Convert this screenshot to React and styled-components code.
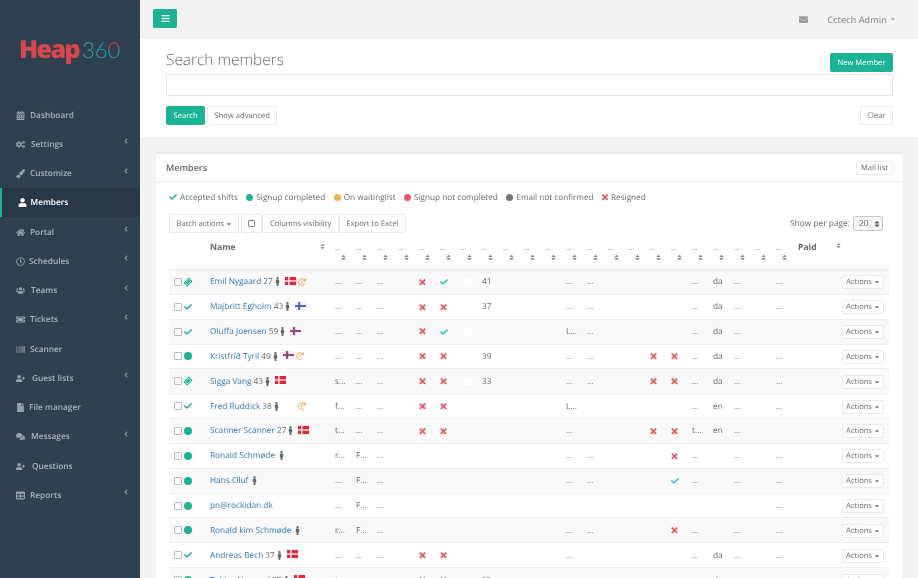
import React from "react";
import styled, { createGlobalStyle } from "styled-components";
import {
  FaCalendarAlt, FaCogs, FaPaintBrush, FaUser, FaHome, FaRegClock, FaUsers, FaTicketAlt,
  FaBarcode, FaUserPlus, FaFile, FaComments, FaTable, FaAngleLeft, FaBars, FaEnvelope,
  FaCheck, FaTimes, FaMale, FaHistory, FaCaretDown, FaSort,
} from "react-icons/fa";

const Global = createGlobalStyle`
  html, body { margin: 0; padding: 0; height: 578px; overflow: hidden; background: #f3f3f4; }
  body { font-family: "Open Sans", "Liberation Sans", sans-serif; font-size: 9px; color: #676a6c; text-rendering: geometricPrecision; }
  * { box-sizing: border-box; }
`;

const Shell = styled.div`display: flex; width: 918px; height: 578px; overflow: hidden; will-change: transform;`;
const Side = styled.aside`width: 140px; flex: none; background: #2f4050; color: #a7b1c2;`;
const LogoBox = styled.div`height: 100px; padding: 37px 0 0 19px; display: flex; align-items: baseline; line-height: 24px;`;
const LogoHeap = styled.span`font: 800 25px/24px "Open Sans", sans-serif; color: #d9464d; letter-spacing: -1.6px;`;
const Logo360 = styled.span`font: 300 22px/24px "Lato", sans-serif; color: #27a7b3; margin-left: 3px;`;
const LogoZero = styled.span`background: linear-gradient(#d9464d 50%, #27a7b3 50%); -webkit-background-clip: text; background-clip: text; color: transparent;`;
const NavItem = styled.div`
  height: 29.25px; display: flex; align-items: center; font-weight: 600; font-size: 8.3px; position: relative;
  padding-top: 1px;
  padding-left: ${p => (p.$active ? "15.5px" : "16px")};
  color: ${p => (p.$active ? "#fff" : "#a7b1c2")};
  background: ${p => (p.$active ? "#293846" : "transparent")};
  border-left: ${p => (p.$active ? "2.5px solid #1ab394" : "0")};
  svg.lead { width: 9px; height: 9px; margin-right: ${p => p.$gap || 5}px; flex: none; opacity: ${p => (p.$active ? 1 : 0.85)}; }
`;
const Chevron = styled(FaAngleLeft)`position: absolute; right: 11px; top: 8px; width: 6px; height: 8px; opacity: .7;`;

const Main = styled.main`flex: 1; min-width: 0; display: flex; flex-direction: column;`;
const Top = styled.header`height: 39px; padding: 9px 22px 0 13px; display: flex; align-items: flex-start; flex: none;`;
const Burger = styled.button`width: 24px; height: 19px; background: #1ab394; border: 0; border-radius: 2px; color: #fff; display: flex; align-items: center; justify-content: center; padding: 0; svg { width: 9px; height: 9px; }`;
const TopRight = styled.div`margin-left: auto; display: flex; align-items: center; height: 20px; color: #999c9e; font-weight: 600; font-size: 9px; svg.env { width: 9px; height: 9px; margin-right: 19px; } svg.car { width: 6px; height: 6px; margin-left: 3px; }`;
const SearchPanel = styled.section`background: #fff; height: 98px; padding: 11px 25px 0 26px; flex: none;`;
const SearchHead = styled.div`display: flex; justify-content: space-between; align-items: flex-start; height: 24px;`;
const Title = styled.h2`margin: 0; font-weight: 300; font-size: 15.4px; line-height: 20px; color: #676a6c;`;
const Btn = styled.button`
  font-family: inherit; font-size: 7.6px; height: 19px; padding: 0 6.5px; border-radius: 2px; cursor: pointer;
  display: inline-flex; align-items: center; white-space: nowrap; text-rendering: geometricPrecision;
  background: ${p => (p.$primary ? "#1ab394" : "#fff")};
  color: ${p => (p.$primary ? "#fff" : "#676a6c")};
  border: 1px solid ${p => (p.$primary ? "#1ab394" : "#e7eaec")};
  font-weight: 400;
`;
const NewBtn = styled(Btn)`margin-top: 3px;`;
const SearchInput = styled.div`height: 22px; border: 1px solid #e5e6e7; margin-bottom: 10px;`;
const SearchActions = styled.div`display: flex; gap: 2px; ${Btn}:last-child { margin-left: auto; }`;

const Card = styled.section`margin: 15px 16px 0 16px; background: #fff; border-top: 2px solid #e7eaec; flex: none;`;
const CardHead = styled.div`height: 28px; padding: 0 9px 0 10px; display: flex; align-items: center; justify-content: space-between; border-bottom: 1px solid #e7eaec; font-weight: 600; font-size: 9px; color: #676a6c;`;
const MailBtn = styled(Btn)`height: 14px; padding: 0 4px; margin-top: 1px;`;
const CardBody = styled.div`padding: 0 13px;`;
const Legend = styled.div`height: 32px; padding: 0 0 2px 0; display: flex; align-items: center; gap: 8.5px; font-size: 8.2px;`;
const LegendItem = styled.span`display: inline-flex; align-items: center; gap: 3px;`;
const Dot = styled.i`display: inline-block; width: ${p => p.$s || 7}px; height: ${p => p.$s || 7}px; border-radius: 50%; background: ${p => p.$c}; flex: none;`;
const Tools = styled.div`height: 19px; display: flex; align-items: center;`;
const ToolBtn = styled(Btn)`margin-right: ${p => p.$mr || 0}px; svg { width: 6px; height: 6px; margin-left: 2px; }`;
const MiniBox = styled.i`display: block; width: 7px; height: 7px; border: 1px solid #888; border-radius: 1px; margin: 0 -.5px;`;
const PerPage = styled.label`margin-left: auto; margin-right: 6px; display: flex; align-items: center; gap: 3px; font-size: 8.4px; `;
const Select = styled.span`width: 30px; height: 15px; border: 1px solid #c5c8ca; border-radius: 3px; background: #f5f5f5; display: flex; align-items: center; justify-content: space-between; padding: 0 2px 0 5px; svg { width: 6px; height: 8px; }`;

const grid = `display: grid; grid-template-columns: 41px 125px repeat(22, 21px) 1fr;`;
const HeadRow = styled.div`${grid} height: 29px; margin-top: 8px; border-bottom: 1px solid #e7eaec; position: relative; font-size: 7px;`;
const NameHead = styled.div`grid-column: 2; font-weight: 700; font-size: 8.6px; display: flex; justify-content: space-between; padding-right: 10px; line-height: 12px; svg { width: 5px; height: 7px; color: #999; margin-top: 2px; }`;
const ColHead = styled.div`display: flex; flex-direction: column; line-height: 10px; padding-top: 3px; color: #676a6c; svg { width: 5px; height: 7px; margin: 0 0 0 6px; color: #888; }`;
const PaidHead = styled.div`font-weight: 700; font-size: 8.6px; line-height: 12px; padding-left: 1px; display: flex; gap: 19px; svg { width: 5px; height: 7px; color: #999; margin-top: 1px; }`;
const Row = styled.div`${grid} height: 24.85px; align-items: center; background: ${p => (p.$odd ? "#f9f9f9" : "#fff")}; border-bottom: 1px solid #eeeeee; position: relative;`;
const Status = styled.div`display: flex; align-items: center; padding-left: 5px; gap: 2px; svg { width: 8px; height: 8px; color: #1ab394; }`;
const Check = styled.i`display: block; width: 8px; height: 8px; border: 1px solid #bbb; border-radius: 1px; background: #fff; margin-right: 0;`;
const TicketIcon = styled(FaTicketAlt)`transform: rotate(-45deg);`;
const NameCell = styled.div`display: flex; align-items: center; white-space: nowrap; font-size: 8.3px; color: #676a6c; position: relative; a { color: #337ab7; text-decoration: none; margin-right: 2px; } svg.m { width: 5px; height: 9px; color: #676a6c; margin-left: 2px; margin-right: 5px; }`;
const Flag = styled.svg`width: 11px; height: 8px; flex: none; margin-right: 2px; margin-top: -2px;`;
const Hist = styled(FaHistory)`width: 8px; height: 8px; color: #f8ac59; transform: scaleX(-1); position: ${p => (p.$abs ? "absolute" : "static")}; left: ${p => p.$abs || 0}px;`;
const Cell = styled.div`grid-column: ${p => p.$col + 3}; font-size: ${p => (p.$big ? 8.3 : 8)}px; white-space: nowrap; color: #676a6c; svg { display: block; }`;
const White = styled.i`display: block; width: 8px; height: 8px; background: #fff; margin-left: 3px;`;
const ActionCell = styled.div`grid-column: 25; grid-row: 1; justify-self: end; margin-right: 5px;`;
const ActionBtn = styled(Btn)`height: 14px; padding: 0 3px; svg { width: 6px; height: 6px; margin-left: 2px; }`;

const Denmark = () => (
  <Flag viewBox="0 0 11 8"><rect width="11" height="8" fill="#e4253c" /><rect x="3.2" width="1.3" height="8" fill="#fff" /><rect y="3.4" width="11" height="1.2" fill="#fff" /></Flag>
);
const Finland = () => (
  <Flag viewBox="0 0 11 8"><rect width="11" height="8" fill="#f4f4f8" /><rect x="3.2" width="2" height="8" fill="#5b62ab" /><rect y="3" width="11" height="2" fill="#5b62ab" /></Flag>
);
const Faroe = () => (
  <Flag viewBox="0 0 11 8"><rect width="11" height="8" fill="#f4f4f8" /><rect x="3" width="2.2" height="8" fill="#5b62ab" /><rect y="2.9" width="11" height="2.2" fill="#5b62ab" /><rect x="3.6" width="1" height="8" fill="#d9364a" /><rect y="3.5" width="11" height="1" fill="#d9364a" /></Flag>
);
const flags = { dk: Denmark, fi: Finland, fo: Faroe };

const nav = [
  ["Dashboard", FaCalendarAlt, 0, 5],
  ["Settings", FaCogs, 1, 6],
  ["Customize", FaPaintBrush, 1, 5],
  ["Members", FaUser, 0, 4, true],
  ["Portal", FaHome, 1, 5],
  ["Schedules", FaRegClock, 1, 4],
  ["Teams", FaUsers, 1, 6],
  ["Tickets", FaTicketAlt, 1, 5],
  ["Scanner", FaBarcode, 0, 5],
  ["Guest lists", FaUserPlus, 1, 7],
  ["File manager", FaFile, 0, 4],
  ["Messages", FaComments, 1, 6],
  ["Questions", FaUserPlus, 0, 7],
  ["Reports", FaTable, 1, 5],
];

const D = "...";
const X = "x", OK = "v", W = "w";
const rows = [
  { s: "t", n: "Emil Nygaard", a: 27, f: "dk", h: 1, c: { 0: D, 1: D, 2: D, 4: X, 5: OK, 6: W, 7: "41", 11: D, 12: D, 17: D, 18: "da", 19: D, 21: D } },
  { s: "c", n: "Majbritt Egholm", a: 43, f: "fi", c: { 0: D, 1: D, 2: D, 4: X, 5: X, 7: "37", 11: D, 12: D, 17: D, 18: "da", 19: D, 21: D } },
  { s: "c", n: "Oluffa Joensen", a: 59, f: "fo", c: { 0: D, 1: D, 2: D, 4: X, 5: OK, 6: W, 11: "L...", 12: D, 17: D, 18: "da", 19: D } },
  { s: "d", n: "Kristfríð Tyril", a: 49, f: "fo", h: 1, c: { 0: D, 1: D, 2: D, 4: X, 5: X, 7: "39", 11: D, 12: D, 15: X, 16: X, 17: D, 18: "da", 19: D, 21: D } },
  { s: "t", n: "Sigga Vang", a: 43, f: "dk", c: { 0: "s...", 1: D, 2: D, 4: X, 5: X, 6: W, 7: "33", 11: D, 12: D, 15: X, 16: X, 17: D, 18: "da", 19: D, 21: D } },
  { s: "c", n: "Fred Ruddick", a: 38, h: 2, c: { 0: "f...", 1: D, 2: D, 4: X, 5: X, 11: "L...", 17: D, 18: "en", 19: D, 21: D } },
  { s: "d", n: "Scanner Scanner", a: 27, f: "dk", c: { 0: "t...", 1: D, 2: D, 4: X, 5: X, 11: D, 15: X, 16: X, 17: "t...", 18: "en", 19: D } },
  { s: "d", n: "Ronald Schmøde", c: { 0: "r...", 1: "F...", 2: D, 11: D, 12: D, 16: X, 17: D, 19: D, 21: D } },
  { s: "d", n: "Hans Oluf", c: { 0: D, 1: "F...", 2: D, 11: D, 12: D, 16: OK, 17: D, 19: D, 21: D } },
  { s: "d", n: "pn@rockidan.dk", nm: 1, c: { 0: D, 1: "F...", 2: D, 21: D } },
  { s: "d", n: "Ronald kim Schmøde", c: { 0: "r...", 1: "F...", 2: D, 11: D, 12: D, 16: X, 17: D, 19: D, 21: D } },
  { s: "c", n: "Andreas Bech", a: 37, f: "dk", c: { 0: D, 1: D, 2: D, 4: X, 5: X, 11: D, 17: D, 18: "da", 19: D, 21: D } },
  { s: "d", n: "Tobias Nygaard", a: 37, f: "dk", c: { 0: "t...", 1: D, 2: D, 4: X, 5: X, 7: "33", 11: D, 17: D, 18: "da", 19: D, 21: D } },
];

const RedX = styled(FaTimes)`color: #ed5565; width: 7px; height: 8.5px; stroke: currentColor; stroke-width: 25px;`;
const TealCheck = styled(FaCheck)`color: #23c6c8; width: 8px; height: 8px;`;
const LegendCheck = styled(FaCheck)`color: #1ab394; width: 8px; height: 8px;`;
const LegendX = styled(FaTimes)`color: #ed5565; width: 6px; height: 8.5px; stroke: currentColor; stroke-width: 25px;`;

const Mark = ({ v }) => {
  if (v === X) return <RedX />;
  if (v === OK) return <TealCheck />;
  if (v === W) return <White />;
  return v;
};

const legend = [
  [<LegendCheck />, "Accepted shifts"],
  [<Dot $c="#1ab394" />, "Signup completed"],
  [<Dot $c="#f8ac59" />, "On waitinglist"],
  [<Dot $c="#ed5565" />, "Signup not completed"],
  [<Dot $c="#777" />, "Email not confirmed"],
  [<LegendX />, "Resigned"],
];

export default function App() {
  return (
    <Shell>
      <Global />
      <Side>
        <LogoBox><LogoHeap>Heap</LogoHeap><Logo360>36<LogoZero>0</LogoZero></Logo360></LogoBox>
        {nav.map(([label, Icon, chev, gap, active]) => (
          <NavItem key={label} $active={active} $gap={gap}>
            <Icon className="lead" />{label}{chev ? <Chevron /> : null}
          </NavItem>
        ))}
      </Side>
      <Main>
        <Top>
          <Burger><FaBars /></Burger>
          <TopRight><FaEnvelope className="env" />Cctech Admin<FaCaretDown className="car" /></TopRight>
        </Top>
        <SearchPanel>
          <SearchHead><Title>Search members</Title><NewBtn $primary>New Member</NewBtn></SearchHead>
          <SearchInput />
          <SearchActions><Btn $primary>Search</Btn><Btn>Show advanced</Btn><Btn>Clear</Btn></SearchActions>
        </SearchPanel>
        <Card>
          <CardHead>Members<MailBtn>Mail list</MailBtn></CardHead>
          <CardBody>
            <Legend>
              {legend.map(([icon, text]) => <LegendItem key={text}>{icon}{text}</LegendItem>)}
            </Legend>
            <Tools>
              <ToolBtn $mr={2}>Batch actions<FaCaretDown /></ToolBtn>
              <ToolBtn><MiniBox /></ToolBtn>
              <ToolBtn>Columns visibility</ToolBtn>
              <ToolBtn>Export to Excel</ToolBtn>
              <PerPage>Show per page:<Select>20<FaSort /></Select></PerPage>
            </Tools>
            <HeadRow>
              <NameHead>Name<FaSort /></NameHead>
              {Array.from({ length: 22 }).map((_, i) => <ColHead key={i}>...<FaSort /></ColHead>)}
              <PaidHead>Paid<FaSort /></PaidHead>
            </HeadRow>
            {rows.map((r, i) => (
              <Row key={r.n} $odd={i % 2 === 0}>
                <Status>
                  <Check />
                  {r.s === "t" && <TicketIcon />}
                  {r.s === "c" && <FaCheck />}
                  {r.s === "d" && <Dot $c="#1ab394" $s={8} />}
                </Status>
                <NameCell>
                  <a>{r.n}</a>
                  {r.a ? `${r.a}` : ""}
                  {!r.nm && <FaMale className="m" />}
                  {r.f ? React.createElement(flags[r.f]) : null}
                  {r.h === 1 && <Hist />}
                  {r.h === 2 && <Hist $abs={88} />}
                </NameCell>
                {Object.entries(r.c).map(([k, v]) => (
                  <Cell key={k} $col={Number(k)} $big={v !== D} style={{ gridRow: 1 }}><Mark v={v} /></Cell>
                ))}
                <ActionCell><ActionBtn>Actions<FaCaretDown /></ActionBtn></ActionCell>
              </Row>
            ))}
          </CardBody>
        </Card>
      </Main>
    </Shell>
  );
}
